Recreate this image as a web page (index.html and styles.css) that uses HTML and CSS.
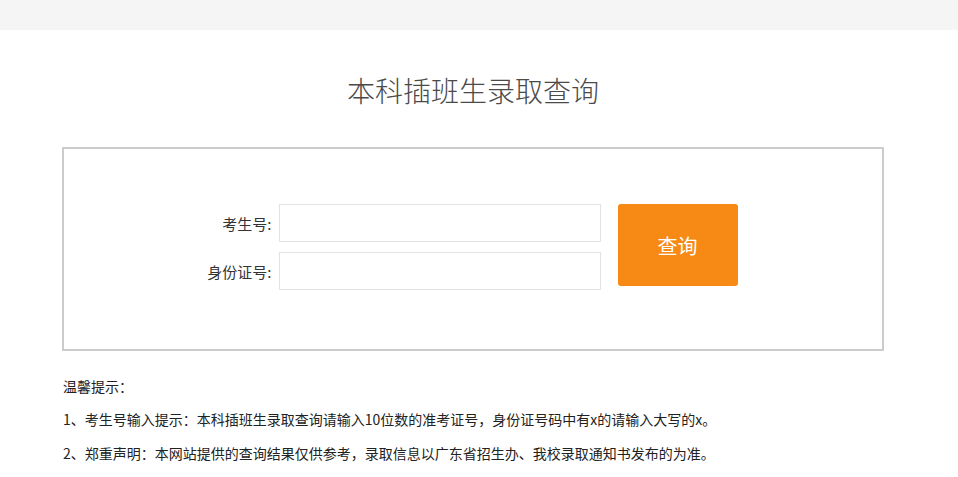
FILE: index.html
```html
<!DOCTYPE html>
<html lang="zh-CN">
<head>
<meta charset="utf-8">
<title>本科插班生录取查询</title>
<link rel="stylesheet" href="styles.css">
</head>
<body>
<div class="topbar"></div>
<div class="main">
  <h1 class="title">本科插班生录取查询</h1>
  <div class="panel">
    <form class="query">
      <div class="fields">
        <div class="row">
          <label class="label">考生号:</label>
          <input class="input" type="text">
        </div>
        <div class="row">
          <label class="label">身份证号:</label>
          <input class="input" type="text">
        </div>
      </div>
      <button class="btn" type="button">查询</button>
    </form>
  </div>
  <div class="notes">
    <p class="note-title">温馨提示：</p>
    <p class="note">1、考生号输入提示：本科插班生录取查询请输入10位数的准考证号，身份证号码中有x的请输入大写的x。</p>
    <p class="note">2、郑重声明：本网站提供的查询结果仅供参考，录取信息以广东省招生办、我校录取通知书发布的为准。</p>
  </div>
</div>
</body>
</html>
```
FILE: styles.css
```css
* { box-sizing: border-box; }
html, body { margin: 0; padding: 0; background: #fff; }
body {
  font-family: "Noto Sans CJK SC", "Noto Sans", sans-serif;
  color: #333;
  font-size: 14px;
}
.topbar {
  height: 30px;
  background: #f5f5f5;
}
.main {
  width: 822px;
  margin: 0 0 0 62px;
}
.title {
  margin: 0;
  padding-top: 43px;
  height: 117px;
  text-align: center;
  font-size: 28px;
  font-weight: 300;
  color: #4a4a4a;
  line-height: 34px;
}
.panel {
  border: 2px solid #cccccc;
  height: 204px;
  display: flex;
  justify-content: center;
  align-items: flex-start;
  padding-top: 55px;
}
.query {
  display: flex;
  align-items: flex-start;
  gap: 17px;
  margin-right: 2px;
}
.fields {
  display: flex;
  flex-direction: column;
  gap: 10px;
}
.row {
  display: flex;
  align-items: center;
  gap: 7px;
}
.label {
  width: 65px;
  text-align: right;
  font-size: 15px;
  color: #333;
  white-space: nowrap;
}
.input {
  width: 322px;
  height: 38px;
  border: 1px solid #e3e3e3;
  margin: 0;
  padding: 0 8px;
  outline: none;
  font-size: 14px;
  background: #fff;
}
.btn {
  width: 120px;
  height: 82px;
  border: none;
  border-radius: 3px;
  background: #f68a15;
  color: #fff;
  font-family: "Noto Sans CJK SC", "Noto Sans", sans-serif;
  font-size: 20px;
  margin: 0;
  padding: 0;
}
.notes {
  padding-top: 25px;
  padding-left: 1px;
}
.notes p {
  margin: 0;
  line-height: 20px;
  font-size: 14px;
  color: #222;
}
.notes .note { margin-top: 13px; }
.notes .note + .note { margin-top: 14px; }
```
